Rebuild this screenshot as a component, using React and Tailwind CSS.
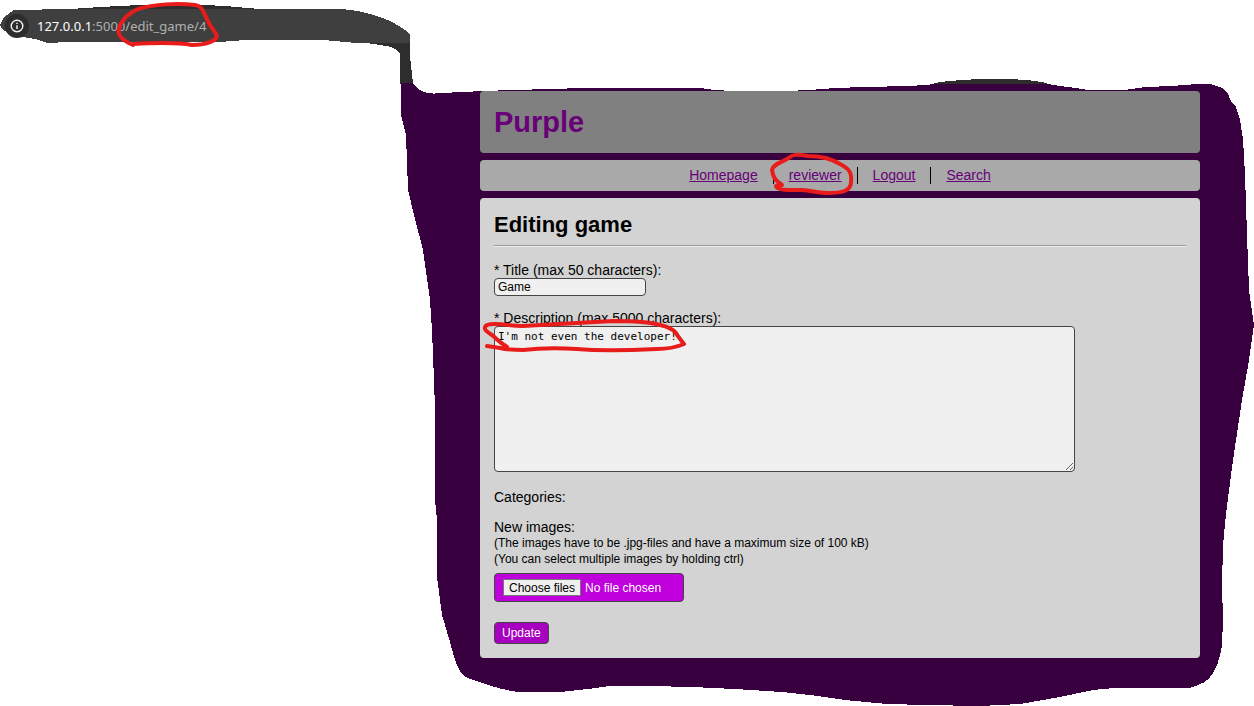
function Backdrop() {
  return (
    <svg
      aria-hidden="true"
      className="pointer-events-none absolute left-0 top-0"
      width="1254"
      height="706"
      viewBox="0 0 1254 706"
      shapeRendering="crispEdges"
    >
      <path
        fill="#2d2d2d"
        d="M70 9 L100 7 L140 5 L185 4 L225 6 L260 9 Z M360 42 L410 42 L410 56 L413 84 L400 84 L400 54 C397 49 392 46 380 45 Z"
      />
      <path
        fill="#3f3f3f"
        d="M0 25 L4 17 L14 10 L70 9 L341 9 C367 11 393 19 410 34 L410 43 L356 43 L324 40 L245 40 L220 42 L140 42 L68 42 L48 43 L35 39 L12 35 L3 30 Z"
      />
      <path fill="#2d2d2d" d="M934 83 L948 81 L963 80 L979 79 L1009 79 L1027 80 L1042 82 L1048 84 L934 84 Z" />
      <path
        fill="#390040"
        d="M401 83 L413 83 C417 89 423 94 435 93.5 L460 92 L510 90 L554 89 L580 88 L700 88 L714 90 L734 91 L787 91 L809 90 L835 88 L865 87 L909 86 L925 85 L934 84 L1048 84 L1060 86 L1076 88 L1088 90 L1124 90 L1146 87 L1171 86 L1198 84 L1210 84 C1218 86 1224 88 1227 92 L1231 101 L1236 107 L1240 120 L1243 139 L1245 175 L1247 235 L1249 290 L1254 325 L1249 360 L1242 400 L1236 440 L1231 475 L1226 514 L1223 545 L1222 585 L1223 620 L1222 645 C1219 663 1214 680 1198 685 L1189 688 L1170 688 L1114 688 L1093 690 L1060 697 L1020 704 L980 706 L926 705 L887 704 L845 700 L810 695 L782 692 L735 689 L692 687 L650 686 L610 686 L588 689 L560 692 L518 692 C502 690 488 685 470 679 C457 674 455 660 450 642 L442 615 L437 577 L437 520 L435 500 L435 409 L434 380 L432 330 L430 300 L423 250 L414 215 L408 190 L406 135 L401 115 Z"
      />
    </svg>
  );
}

function Markings() {
  return (
    <svg
      aria-hidden="true"
      className="pointer-events-none absolute left-0 top-0"
      width="1254"
      height="706"
      viewBox="0 0 1254 706"
      fill="none"
      stroke="#e91c1c"
      strokeWidth="4"
      strokeLinecap="round"
      strokeLinejoin="round"
    >
      <path d="M133 45 C123 41 117 35 119 29 C121 21 127 14 138 9 C154 4 178 3 195 5 C203 6 203 12 207 19 C210 27 215 31 217 36 C216 41 206 45 192 45 C175 42 152 43 133 44" />
      <path d="M787 190 C781 190 776 188 776 186 C777 185 781 186 782 185 C776 181 773 178 772 170 C773 164 782 162 787 159 C793 154 796 154 808 156 C822 156 832 159 840 164 C850 169 852 173 851 183 C850 191 843 193 827 193 C815 193 807 189 797 190 L787 190 Z" />
      <path d="M487 346 L500 348 C509 350 515 350 523 350 C540 348 560 348 577 349 C600 351 635 350 657 349 C667 349 677 347 684 344 C681 340 678 337 676 333 C672 328 665 326 660 325 C646 321 628 321 613 321 C593 322 563 324 523 326 C510 326 495 322 487 325 C481 329 489 333 492 335 L500 342 L507 347" />
    </svg>
  );
}

const links = ["Homepage", "reviewer", "Logout", "Search"];

export default function App() {
  return (
    <div className="relative min-h-screen overflow-hidden bg-white font-['Liberation_Sans',Arial,sans-serif] text-[14px] leading-4 text-black">
      <Backdrop />

      <div className="relative flex h-[52px] items-center gap-2 pl-[5px] font-['Noto_Sans','Open_Sans',sans-serif] text-[13px]">
        <span className="flex size-6 items-center justify-center rounded-full bg-[#2d2d2d]">
          <svg width="14" height="14" viewBox="0 0 14 14" fill="none" stroke="#f1f1f1" aria-hidden="true">
            <circle cx="7" cy="7" r="5.8" strokeWidth="1.4" />
            <path d="M7 6.2 V10" strokeWidth="1.5" />
            <path d="M7 3.7 V5.1" strokeWidth="1.5" />
          </svg>
        </span>
        <p className="text-[#b0b0b0]">
          <span className="text-white">127.0.0.1</span>:5000/edit_game/4
        </p>
      </div>

      <div className="relative mt-[39px] flex flex-col gap-[7px] pb-12 pl-[480px] pr-[54px]">
        <header className="rounded bg-[#808080] px-[14px] py-[15px]">
          <h1 className="text-[29px] font-bold leading-8 text-[#680078]">Purple</h1>
        </header>

        <nav className="rounded bg-[#a9a9a9] py-[7px]">
          <ul className="flex h-[17px] justify-center divide-x divide-black">
            {links.map((name) => (
              <li key={name} className="px-[15px]">
                <a href="#" className="text-[#680078] underline">
                  {name}
                </a>
              </li>
            ))}
          </ul>
        </nav>

        <main className="rounded bg-[#d3d3d3] p-[14px]">
          <h2 className="text-[22px] font-bold leading-[26px]">Editing game</h2>
          <hr className="mb-[15px] mt-[7px] border-b border-t border-b-[#eeeeee] border-t-[#9a9a9a]" />

          <form onSubmit={(e) => e.preventDefault()}>
            <label htmlFor="title" className="block">
              * Title (max 50 characters):
            </label>
            <input
              id="title"
              type="text"
              maxLength={50}
              defaultValue="Game"
              className="block h-[18px] w-[152px] rounded border border-[#444444] bg-[#f0f0f0] px-[3px] text-[12px]"
            />

            <label htmlFor="description" className="mt-[14px] block">
              * Description (max 5000 characters):
            </label>
            <textarea
              id="description"
              maxLength={5000}
              defaultValue="I'm not even the developer!"
              className="block h-[146px] w-[581px] max-w-full resize rounded border border-[#444444] bg-[#f0f0f0] px-[3px] py-[3px] font-['DejaVu_Sans_Mono',monospace] text-[11px] leading-[14px]"
            />

            <p className="mt-[17px]">Categories:</p>

            <p className="mt-[14px]">New images:</p>
            <p className="text-[12px]">(The images have to be .jpg-files and have a maximum size of 100 kB)</p>
            <p className="text-[12px]">(You can select multiple images by holding ctrl)</p>
            <label
              htmlFor="images"
              className="relative mt-[6px] flex h-[29px] w-[190px] items-center gap-1 rounded border border-[#444444] bg-[#c000dc] px-2 text-[12px] text-white"
            >
              <input id="images" type="file" accept=".jpg" multiple className="sr-only" />
              <span className="flex h-[17px] items-center border border-[#767676] bg-[#efefef] px-[5px] text-black">
                Choose files
              </span>
              <span>No file chosen</span>
            </label>

            <button
              type="submit"
              className="mt-5 block h-[22px] rounded border border-[#444444] bg-[#a800c0] px-[7px] text-[12px] text-white"
            >
              Update
            </button>
          </form>
        </main>
      </div>

      <Markings />
    </div>
  );
}
